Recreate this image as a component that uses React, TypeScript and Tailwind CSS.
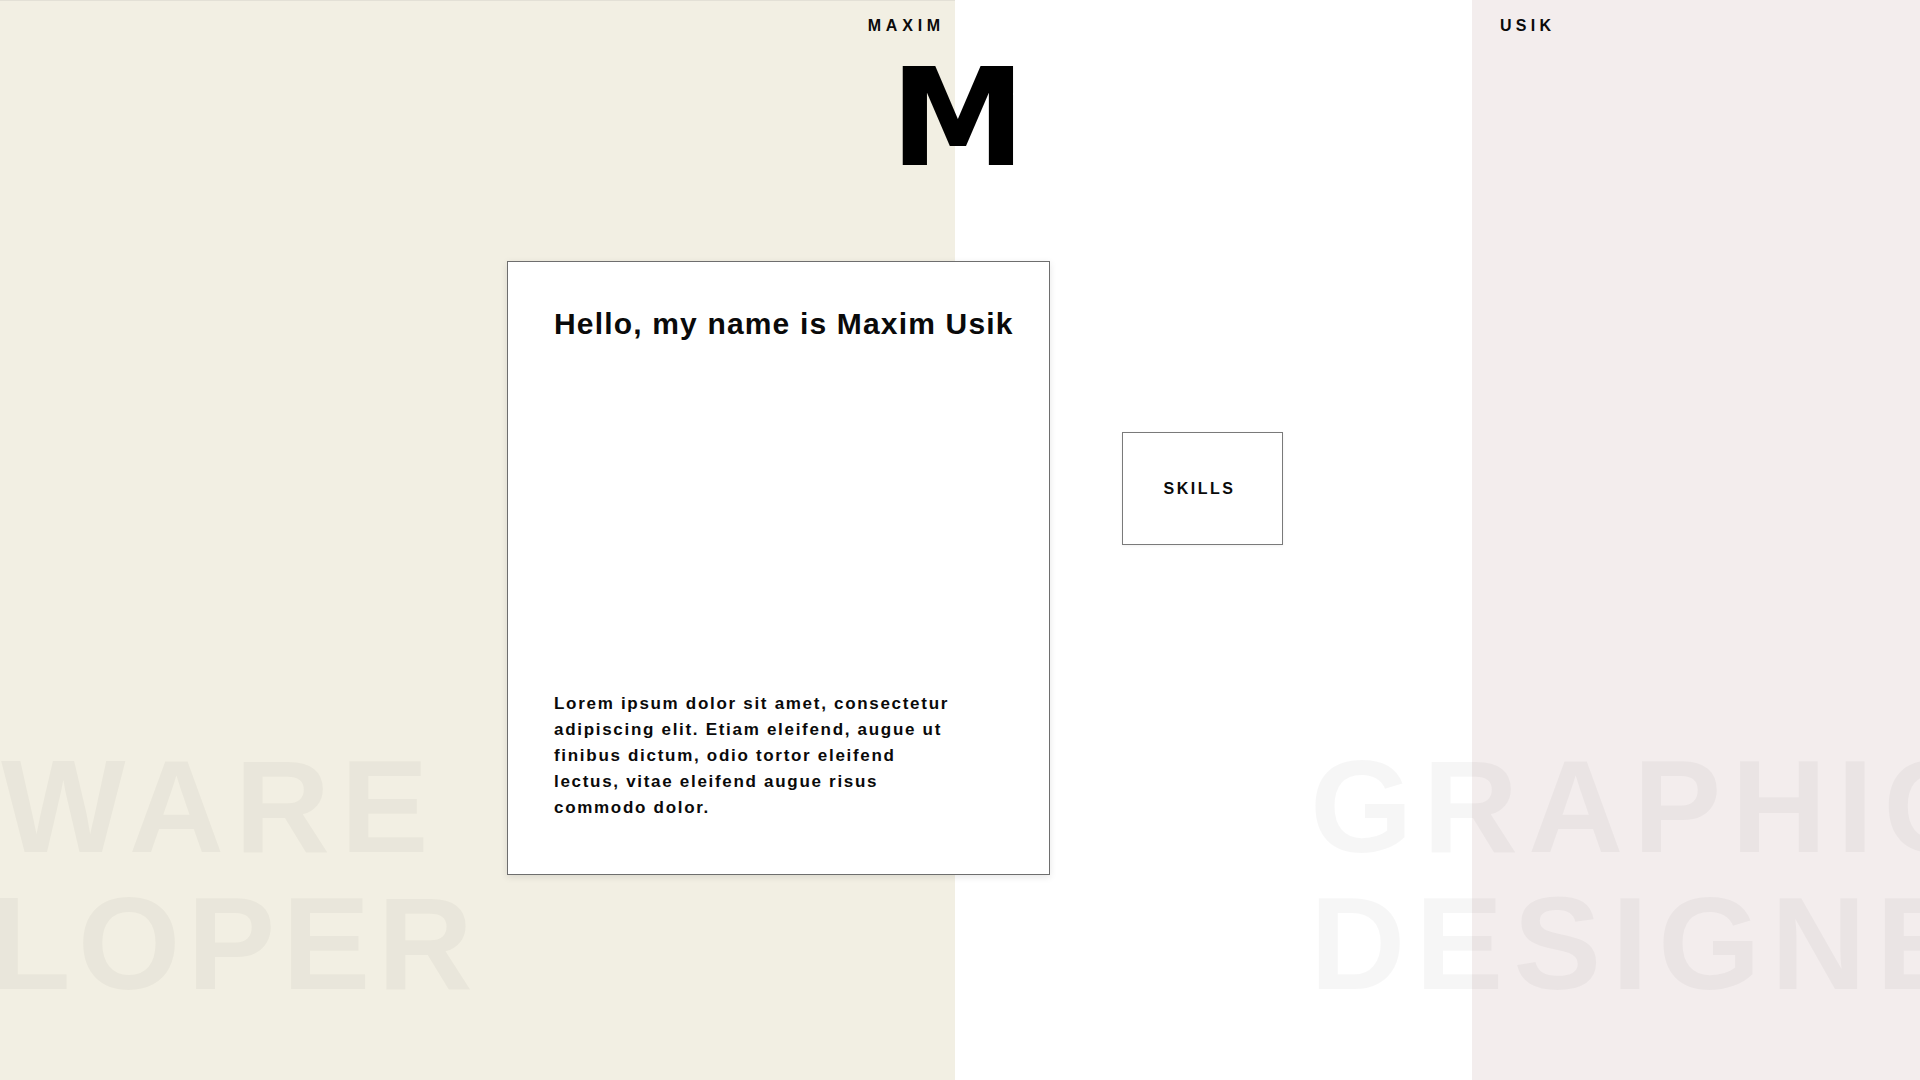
import React from 'react';

export default function App() {
  return (
    <div className="relative h-screen w-full overflow-hidden bg-white font-['Liberation_Sans',Arial,sans-serif] text-[#0a0a0a]">
      {/* Columns */}
      <div className="flex h-full">
        <div className="flex h-full w-[955px] items-start justify-end border-t border-[#e3e0d6] bg-[#f2efe3] pr-[10px] pt-[17px]">
          <span className="text-[16px] font-bold leading-none tracking-[4.8px]">MAXIM</span>
        </div>
        <div className="h-full w-[517px]" />
        <div className="flex h-full flex-1 items-start bg-[#f3eded] pl-[28px] pt-[18px]">
          <span className="text-[16px] font-bold leading-none tracking-[4.3px]">USIK</span>
        </div>
      </div>

      {/* Background words */}
      <div className="pointer-events-none absolute left-[-1px] top-[738px] whitespace-nowrap text-[132px] font-bold leading-[137px] text-[rgba(0,0,0,0.037)]">
        <div className="ml-[2px] tracking-[10.5px]">WARE</div>
        <div className="ml-[-9px] tracking-[7px]">LOPER</div>
      </div>
      <div className="pointer-events-none absolute left-[1310px] top-[738px] whitespace-nowrap text-[132px] font-bold leading-[137px] tracking-[10px] text-[rgba(0,0,0,0.037)]">
        <div>GRAPHIC</div>
        <div>DESIGNER</div>
      </div>

      {/* Monogram */}
      <div className="absolute left-[858px] top-[50px] w-[200px] text-center font-['DejaVu_Sans',sans-serif] text-[136px] font-bold leading-none text-black">
        M
      </div>

      {/* Intro card */}
      <div className="absolute left-[507px] top-[261px] flex h-[614px] w-[543px] flex-col justify-between border border-[#6e6e6e] bg-white pb-[53px] pl-[46px] pt-[44px] shadow-[0_2px_7px_rgba(0,0,0,0.1)]">
        <h1 className="whitespace-nowrap text-[30px] font-bold leading-[1.2] tracking-[0.039em]">
          Hello, my name is Maxim Usik
        </h1>
        <p className="whitespace-nowrap text-[17px] font-bold leading-[26px] tracking-[1.7px]">
          Lorem ipsum dolor sit amet, consectetur
          <br />
          adipiscing elit. Etiam eleifend, augue ut
          <br />
          finibus dictum, odio tortor eleifend
          <br />
          lectus, vitae eleifend augue risus
          <br />
          commodo dolor.
        </p>
      </div>

      {/* Skills */}
      <div className="absolute left-[1122px] top-[432px] flex h-[113px] w-[161px] items-center justify-center border border-[#7a7a7a] bg-white pr-[6px] shadow-[0_1px_3px_rgba(0,0,0,0.06)]">
        <span className="text-[16px] font-bold leading-none tracking-[2.5px]">SKILLS</span>
      </div>
    </div>
  );
}
